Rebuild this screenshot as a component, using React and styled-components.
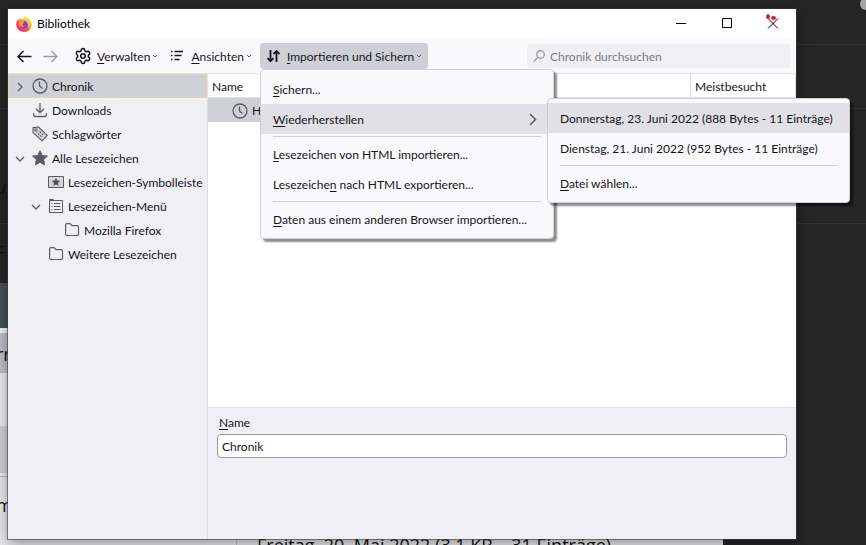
// Firefox library window with the open import menu
import styled, { createGlobalStyle, css } from 'styled-components'
import { Settings } from 'lucide-react'

const GlobalStyle = createGlobalStyle`
  * {
    box-sizing: border-box;
  }
  body {
    margin: 0;
    background: #252525;
    color: #15141a;
    font: 12px/16px Lato, "Noto Sans", sans-serif;
  }
  button, input {
    font: inherit;
    color: inherit;
  }
  button {
    border: 0;
    background: none;
    padding: 0;
  }
  u {
    text-underline-offset: 2px;
    text-decoration-thickness: 1px;
    text-decoration-skip-ink: none;
  }
  svg {
    display: block;
    flex: none;
  }
`
const Desktop = styled.div`
  position: relative;
  display: flex;
  height: 100vh;
  padding: 9px 70px 6px 8px;
  overflow: hidden;
`
// page that lies behind the window
const Backdrop = styled.div`
  position: absolute;
  inset: 0;
  display: flex;
  flex-direction: column;
  color: #111;
  font-family: "Open Sans", "Noto Sans", sans-serif;
  font-size: 18px;
  line-height: 24px;
`
const Strip = styled.div`
  flex: none;
  height: ${({ $height }) => $height}px;
  background: ${({ $color }) => $color || 'transparent'};
  border-bottom: ${({ $line }) => ($line ? `1px solid ${$line}` : '0')};
  padding-top: ${({ $pad }) => $pad || 0}px;
  width: ${({ $light }) => ($light ? '723px' : 'auto')};
  font-style: ${({ $italic }) => ($italic ? 'italic' : 'normal')};
  text-indent: -4px;
`
const Footer = styled.div`
  flex: 1;
  display: flex;
  width: 723px;
  background: #e9e9eb;
`
const FooterSide = styled.div`
  width: 237px;
  border-right: 1px solid #c4c4cc;
  padding-top: 16px;
  text-indent: -4px;
`
const FooterText = styled.div`
  padding: 56px 0 0 20px;
  white-space: nowrap;
`
const Knob = styled.span`
  position: absolute;
  top: -2px;
  right: -6px;
  width: 12px;
  height: 12px;
  border-radius: 50%;
  background: #a5a5a5;
`
const Window = styled.section`
  position: relative;
  flex: 1;
  display: flex;
  flex-direction: column;
  min-width: 0;
  background: #fff;
  box-shadow: 0 0 0 1px rgba(60, 60, 60, 0.6), 0 4px 14px rgba(0, 0, 0, 0.4);
`
const TitleBar = styled.header`
  display: flex;
  align-items: center;
  height: 30px;
  padding-left: 8px;
  gap: 5px;
  color: #000;
`
const Title = styled.h1`
  flex: 1;
  margin: 0;
  font: inherit;
`
const Controls = styled.div`
  display: flex;
  align-self: stretch;
`
const ControlButton = styled.button`
  display: grid;
  place-items: center;
  width: 46px;
`
const Toolbar = styled.div`
  display: flex;
  align-items: center;
  height: 35px;
  padding: 0 6px 0 8px;
  background: #f9f9fb;
  border-bottom: 1px solid #e0e0e6;
`
const NavButton = styled.button`
  width: 26px;
  height: 26px;
  display: flex;
  align-items: center;
  opacity: ${({ disabled }) => (disabled ? 0.4 : 1)};
`
const ToolButton = styled.button`
  display: flex;
  align-items: center;
  gap: 5px;
  height: 26px;
  padding: 0 6px;
  border-radius: 4px;
  color: #15141a;
  white-space: nowrap;
  ${({ $open }) => $open && css`
    background: #cfcfd8;
  `}
`
const ToolLabel = styled.span`
  display: flex;
  align-items: center;
  gap: 2px;
  padding-top: 2px;
`
const MenuAnchor = styled.div`
  position: relative;
  margin-left: 2px;
`
const SearchBox = styled.label`
  display: flex;
  align-items: center;
  gap: 5px;
  width: 263px;
  height: 24px;
  margin-left: auto;
  padding: 0 6px;
  border-radius: 4px;
  background: #f0f0f4;
  color: #8f8f9d;
  input {
    flex: 1;
    min-width: 0;
    padding: 2px 0 0;
    border: 0;
    outline: 0;
    background: none;
  }
  input::placeholder {
    color: #7b7b86;
    opacity: 1;
  }
`
const menuBox = css`
  position: absolute;
  margin: 0;
  padding: 4px 0;
  list-style: none;
  background: #f9f9fb;
  border: 1px solid #cfcfd8;
  border-radius: 4px;
  box-shadow: 3px 3px 2px rgba(0, 0, 0, 0.45);
`
const Menu = styled.ul`
  ${menuBox}
  top: 100%;
  left: 0;
  z-index: 2;
  width: 294px;
`
const SubMenu = styled.ul`
  ${menuBox}
  top: -6px;
  left: calc(100% - 6px);
  width: 303px;
`
const MenuItem = styled.li`
  position: relative;
`
const MenuButton = styled.button`
  display: flex;
  align-items: center;
  justify-content: space-between;
  width: 100%;
  height: 30px;
  padding: 2px 14px 0 12px;
  white-space: nowrap;
  background: ${({ $active }) => ($active ? '#e0e0e6' : 'transparent')};
`
const Separator = styled.li`
  height: 1px;
  margin: 2px 12px;
  background: #cfcfd8;
`
const Body = styled.div`
  flex: 1;
  display: flex;
  min-height: 0;
`
const Tree = styled.ul`
  flex: none;
  width: 200px;
  margin: 0;
  padding: 0;
  list-style: none;
  background: #f0f0f4;
  border-right: 1px solid #e0e0e6;
`
const TreeRow = styled.li`
  display: flex;
  align-items: center;
  height: 24px;
  padding-left: ${({ $level }) => 4 + $level * 16}px;
  white-space: nowrap;
  border: 1px dotted transparent;
  ${({ $selected }) => $selected && css`
    background: #cfcfd8;
    border-color: #fbdc7c;
  `}
`
const Twisty = styled.span`
  flex: none;
  display: grid;
  place-items: center;
  width: 14px;
  padding-top: 2px;
  margin-right: 5px;
`
const TreeLabel = styled.span`
  padding-top: 2px;
  margin-left: 4px;
`
const Main = styled.main`
  flex: 1;
  display: flex;
  flex-direction: column;
  min-width: 0;
`
const TableArea = styled.div`
  flex: 1;
`
const Table = styled.table`
  width: 100%;
  table-layout: fixed;
  border-collapse: separate;
  border-spacing: 0;
  th, td {
    height: 24px;
    padding: 2px 4px 0;
    text-align: left;
    font-weight: normal;
  }
  th {
    border-right: 1px solid #e0e0e6;
    border-bottom: 1px solid #e0e0e6;
  }
  td {
    background: #cfcfd8;
  }
`
const HeadCell = styled.th`
  width: ${({ $width }) => $width || 'auto'};
`
const NameCell = styled.div`
  display: flex;
  align-items: center;
  gap: 4px;
  padding-left: 20px;
`
const Details = styled.form`
  display: flex;
  flex-direction: column;
  height: 132px;
  padding: 7px 9px;
  background: #f0f0f4;
  border-top: 1px solid #e0e0e6;
  label {
    padding: 0 2px;
    margin-bottom: 3px;
  }
`
const NameInput = styled.input`
  height: 24px;
  padding: 0 4px;
  border: 1px solid #9b9b9f;
  border-radius: 4px;
  background: #fff;
`

const Icon = ({ size = 16, children, ...rest }) => (
  <svg width={size} height={size} viewBox={`0 0 ${size} ${size}`} fill='none' stroke='currentColor' {...rest}>
    {children}
  </svg>
)
const FirefoxLogo = () => (
  <svg width='16' height='16' viewBox='0 0 16 16'>
    <defs>
      <linearGradient id='flame' x1='0.85' y1='0.1' x2='0.2' y2='0.95'>
        <stop offset='0' stopColor='#fff14a' />
        <stop offset='0.35' stopColor='#ffb02a' />
        <stop offset='0.6' stopColor='#ff5f35' />
        <stop offset='1' stopColor='#ee1f68' />
      </linearGradient>
    </defs>
    <path fill='url(#flame)' d='M8.9.1c1.5.9 2.2 1.9 2.5 3 .4-.1.6-.6.6-1 2.4 1.500 3.900 3.500 3.900 6.500A7.700 7.400 0 0 1 8 16 7.700 7.500 0 0 1 .2 8.500C.2 6.500.8 4.700 1.900 3.200c0 .5.200.9.500 1.200C2.700 3.300 3.500 2.300 4.500 1.700c-.1.800.1 1.500.6 2C6.500 3.500 8.600 2.800 8.900.1z' />
    <circle cx='8.200' cy='8.800' r='3.700' fill='#7542e5' />
    <path fill='#ff9a2a' d='M3.200 5.200c1.300-.7 2.500-.4 3.400.3.800.1 1.500 0 1.900.4-.2.900-1.600 1.200-1.900 2.100-.4 1.500.6 2 2.200 1.700-.8 1.300-2.900 1.700-4.300.4-1.400-1.300-1.900-3-1.300-4.900z' />
    <path fill='#ffd43a' d='M9.200 1.200c.9 1.500 2.900 2.200 3.600 4.600.5 1.800.2 3.500-.7 4.700.3-2.200-.4-4.300-2-5.200-1.300-.8-1.800-2.400-.9-4.100z' />
  </svg>
)
const Clock = () => (
  <Icon stroke='#5b5b66'>
    <circle cx='8' cy='8' r='7' strokeWidth='1.3' />
    <path d='M7.500 3.500V8l3 2.500' strokeWidth='1.3' />
  </Icon>
)
const Download = () => (
  <Icon stroke='#5b5b66' strokeWidth='1.3'>
    <path d='M8 1v9.500M4 6.800l4 4 4-4M1.700 11v2.200q0 1.300 1.300 1.300h10q1.300 0 1.300-1.300V11' />
  </Icon>
)
const Tag = () => (
  <Icon stroke='#5b5b66' strokeWidth='1.1'>
    <path d='M1 1.600 6.500 1l8.800 8.300-5.300 5.600L1 6.600z' fill='#d0d0d6' strokeLinejoin='round' />
    <circle cx='4' cy='4' r='1.200' fill='#f0f0f4' />
    <path d='M7.600 5.500 11.800 9.500M5.800 7.300l4.100 4' strokeDasharray='2 1' />
  </Icon>
)
const starPath = 'M8 .8l2.200 4.700 5.200.6-3.800 3.500 1 5.300L8 12.300l-4.600 2.600 1-5.300L.6 6.100l5.200-.6z'
const Star = () => (
  <Icon stroke='#5b5b66' strokeLinejoin='round'>
    <path d={starPath} fill='#5b5b66' />
  </Icon>
)
const ToolbarFolder = () => (
  <Icon stroke='#5b5b66'>
    <path d='M.5 2.500h15v11H.5z' fill='#d4d4d9' />
    <path d={starPath} transform='translate(4 4) scale(.5)' fill='#4a4a55' />
  </Icon>
)
const MenuFolder = () => (
  <Icon stroke='#5b5b66'>
    <path d='M1.500 2.500V1.500h4l1 1M1.500 2.500h13v12h-13z' />
    <path d='M3.500 5.500h1M6 5.500h6.500M3.500 8.500h1M6 8.500h6.500M3.500 11.500h1M6 11.500h6.500' />
  </Icon>
)
const Folder = () => (
  <Icon stroke='#5b5b66' strokeWidth='1.2'>
    <path d='M1.600 3Q1.600 1.600 3 1.600h2.700q.6 0 1 .5l1.200 1.500H13q1.500 0 1.500 1.400v7.200q0 1.300-1.500 1.300H3q-1.400 0-1.400-1.300z' />
  </Icon>
)
const Caret = () => (
  <Icon size={6} stroke='#5b5b66'>
    <path d='M1 1l2 2 2-2' />
  </Icon>
)
const Chevron = ({ open }) => (
  <Icon size={10} stroke='#5b5b66' strokeWidth='1.3'>
    <path d={open ? 'M1 3l4 4 4-4' : 'M3 1l4 4-4 4'} />
  </Icon>
)

const folders = [
  { level: 0, icon: Clock, label: 'Chronik', twisty: 'closed', selected: true },
  { level: 0, icon: Download, label: 'Downloads' },
  { level: 0, icon: Tag, label: 'Schlagwörter' },
  { level: 0, icon: Star, label: 'Alle Lesezeichen', twisty: 'open' },
  { level: 1, icon: ToolbarFolder, label: 'Lesezeichen-Symbolleiste' },
  { level: 1, icon: MenuFolder, label: 'Lesezeichen-Menü', twisty: 'open' },
  { level: 2, icon: Folder, label: 'Mozilla Firefox' },
  { level: 1, icon: Folder, label: 'Weitere Lesezeichen' },
]

const ImportMenu = () => (
  <Menu>
    <MenuItem><MenuButton><span><u>S</u>ichern...</span></MenuButton></MenuItem>
    <MenuItem>
      <MenuButton $active>
        <span><u>W</u>iederherstellen</span>
        <Icon size={14} stroke='#5b5b66' strokeWidth='1.5'><path d='M5 1l5.500 5.500L5 12' /></Icon>
      </MenuButton>
      <SubMenu>
        <MenuItem><MenuButton $active>Donnerstag, 23. Juni 2022 (888 Bytes - 11 Einträge)</MenuButton></MenuItem>
        <MenuItem><MenuButton>Dienstag, 21. Juni 2022 (952 Bytes - 11 Einträge)</MenuButton></MenuItem>
        <Separator />
        <MenuItem><MenuButton><span><u>D</u>atei wählen...</span></MenuButton></MenuItem>
      </SubMenu>
    </MenuItem>
    <Separator />
    <MenuItem><MenuButton><span><u>L</u>esezeichen von HTML importieren...</span></MenuButton></MenuItem>
    <MenuItem><MenuButton><span>Lesezeiche<u>n</u> nach HTML exportieren...</span></MenuButton></MenuItem>
    <Separator />
    <MenuItem><MenuButton><span><u>D</u>aten aus einem anderen Browser importieren...</span></MenuButton></MenuItem>
  </Menu>
)

const App = () => (
  <Desktop>
    <GlobalStyle />
    <Backdrop>
      <Strip $height={45} $line='#333' />
      <Strip $height={64} $line='#303030' />
      <Strip $height={115} $line='#333' $pad={66} $italic>u</Strip>
      <Strip $height={59} $pad={16}>F</Strip>
      <Strip $height={45} $color='#475057' $light />
      <Strip $height={5} $color='#f0f0f0' $light />
      <Strip $height={40} $color='#c0bfca' $light $pad={9}>rr</Strip>
      <Strip $height={53} $color='#ececee' $light />
      <Strip $height={47} $color='#cfcfd4' $light />
      <Strip $height={4} $color='#ececee' $light $line='#b9b9c4' />
      <Footer>
        <FooterSide>m</FooterSide>
        <FooterText>Freitag, 20. Mai 2022 (3,1 KB – 31 Einträge)</FooterText>
      </Footer>
      <Knob />
    </Backdrop>
    <Window>
      <TitleBar>
        <FirefoxLogo />
        <Title>Bibliothek</Title>
        <Controls>
          <ControlButton aria-label='Minimieren'>
            <Icon size={20} stroke='#000'><path d='M5 9.500h10' /></Icon>
          </ControlButton>
          <ControlButton aria-label='Maximieren'>
            <Icon size={20} stroke='#000'><path d='M5.500 4.500h9v9h-9z' /></Icon>
          </ControlButton>
          <ControlButton aria-label='Schließen'>
            <Icon size={20} stroke='#000'>
              <path d='M5 4.500l10 10M15 4.500l-10 10' />
              <ellipse cx='5' cy='2.500' rx='2' ry='2.500' fill='#e81c24' stroke='none' />
              <ellipse cx='10.500' cy='4' rx='2.500' ry='2' fill='#e81c24' stroke='none' />
            </Icon>
          </ControlButton>
        </Controls>
      </TitleBar>
      <Toolbar>
        <NavButton aria-label='Zurück'>
          <Icon strokeWidth='1.5'><path d='M15.500 8.500H2M7.500 3 2 8.500l5.500 5.500' /></Icon>
        </NavButton>
        <NavButton aria-label='Vor' disabled>
          <Icon strokeWidth='1.3'><path d='M1.500 8.500H15M9.500 3l5.500 5.500L9.500 14' /></Icon>
        </NavButton>
        <ToolButton>
          <Settings size={18} strokeWidth={2} />
          <ToolLabel><span><u>V</u>erwalten</span><Caret /></ToolLabel>
        </ToolButton>
        <ToolButton>
          <Icon strokeWidth='1.5'>
            <path d='M1 3.500h1.500M4.500 3.500H13M1 7.500h1.500M4.500 7.500h7M1 11.500h1.500M4.500 11.500h5' />
          </Icon>
          <ToolLabel><span><u>A</u>nsichten</span><Caret /></ToolLabel>
        </ToolButton>
        <MenuAnchor>
          <ToolButton $open aria-expanded='true'>
            <Icon strokeWidth='1.8'>
              <path d='M4.500 2v11M1.500 10.200l3 3 3-3M10.500 14V3M7.500 6l3-3 3 3' />
            </Icon>
            <ToolLabel><span><u>I</u>mportieren und Sichern</span><Caret /></ToolLabel>
          </ToolButton>
          <ImportMenu />
        </MenuAnchor>
        <SearchBox>
          <Icon size={12} stroke='#8f8f9d' strokeWidth='1.2'>
            <circle cx='7.500' cy='4.500' r='3.800' />
            <path d='M4.800 7.300.8 11.300' />
          </Icon>
          <input type='search' placeholder='Chronik durchsuchen' aria-label='Chronik durchsuchen' />
        </SearchBox>
      </Toolbar>
      <Body>
        <Tree>
          {folders.map(({ level, icon: FolderIcon, label, twisty, selected }) => (
            <TreeRow key={label} $level={level} $selected={selected}>
              <Twisty>{twisty && <Chevron open={twisty === 'open'} />}</Twisty>
              <FolderIcon />
              <TreeLabel>{label}</TreeLabel>
            </TreeRow>
          ))}
        </Tree>
        <Main>
          <TableArea>
            <Table>
              <thead>
                <tr>
                  <HeadCell $width='51%'>Name</HeadCell>
                  <HeadCell>Adresse</HeadCell>
                  <HeadCell $width='105px'>Meistbesucht</HeadCell>
                </tr>
              </thead>
              <tbody>
                <tr>
                  <td><NameCell><Clock />H</NameCell></td>
                  <td />
                  <td />
                </tr>
              </tbody>
            </Table>
          </TableArea>
          <Details>
            <label htmlFor='name'><u>N</u>ame</label>
            <NameInput id='name' defaultValue='Chronik' />
          </Details>
        </Main>
      </Body>
    </Window>
  </Desktop>
)

export default App
